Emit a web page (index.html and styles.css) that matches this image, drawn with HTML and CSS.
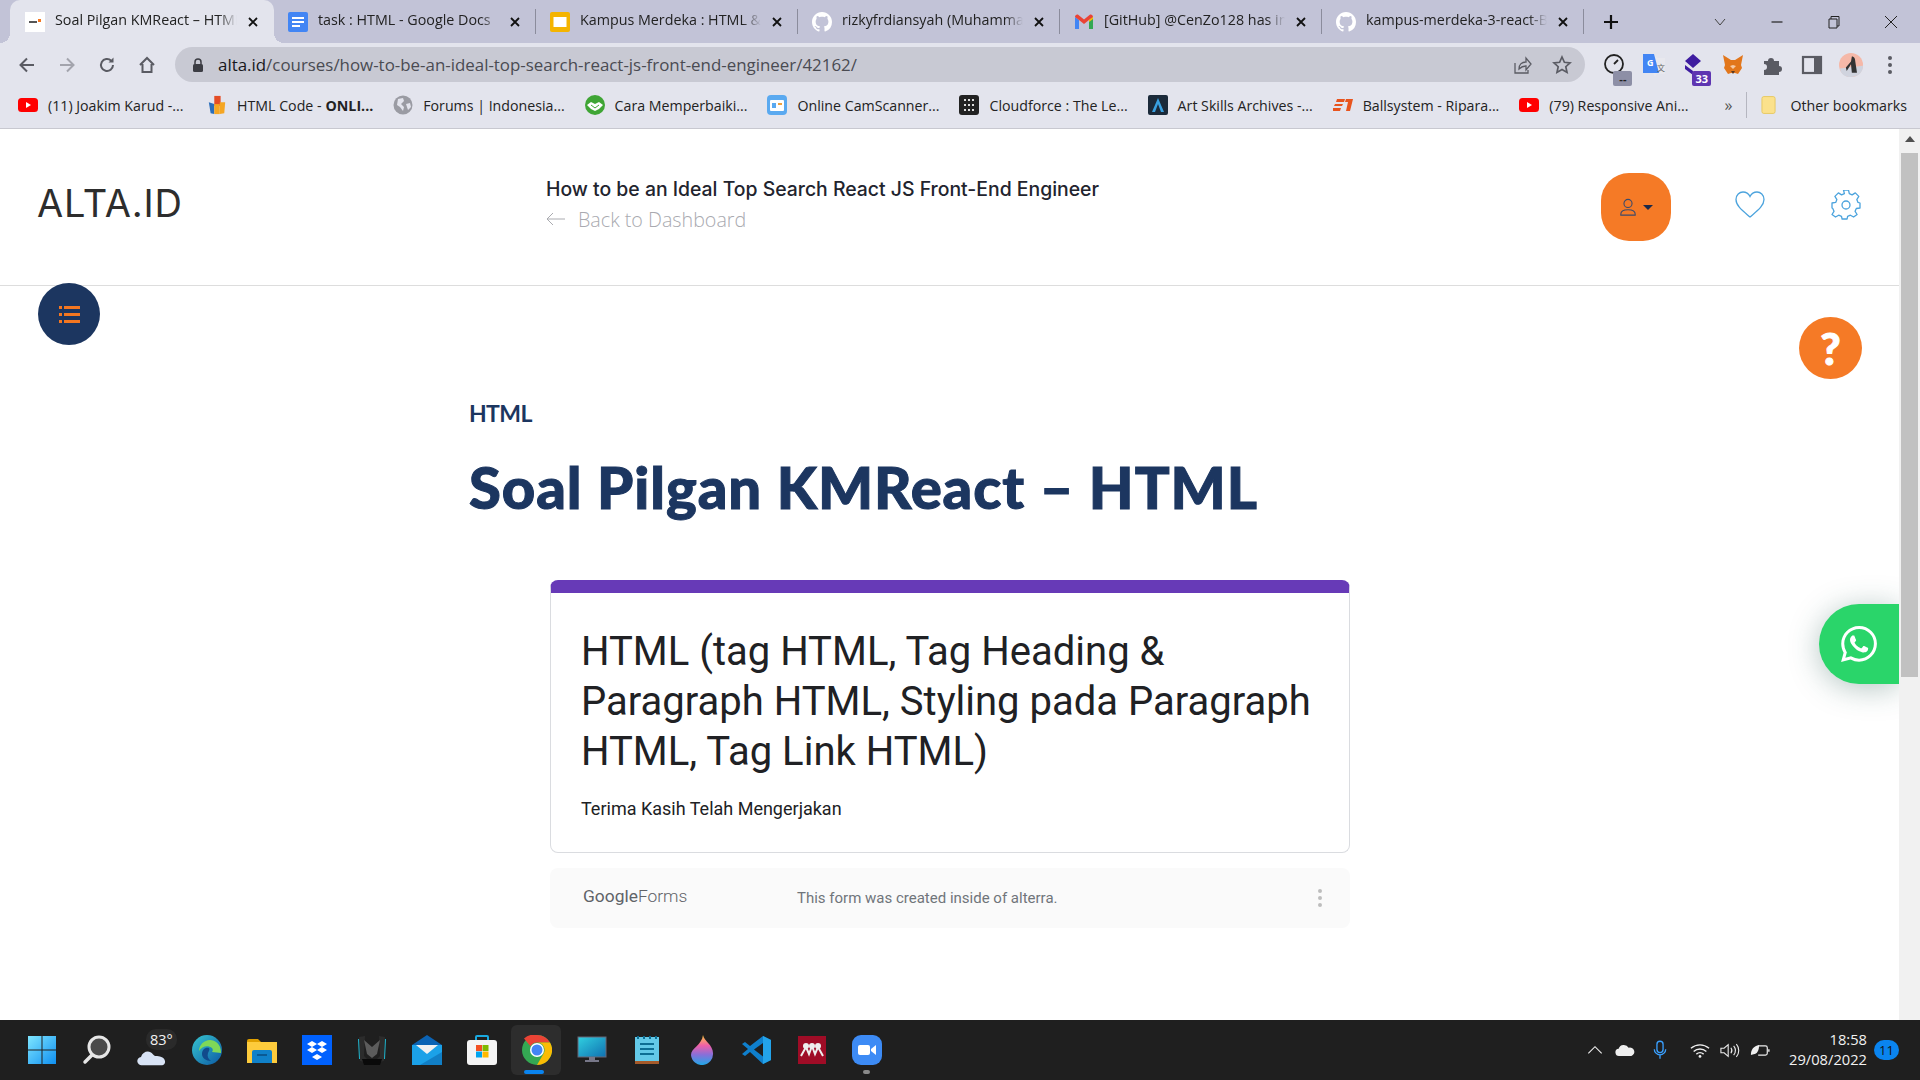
FILE: index.html
```html
<!DOCTYPE html>
<html lang="en">
<head>
    <meta charset="UTF-8">
    <meta name="viewport" content="width=device-width, initial-scale=1.0">
    <title>Soal Pilgan KMReact - HTML</title>
    <link rel="stylesheet" href="styles.css">
</head>
<body>

<svg class="defs" width="0" height="0">
    <symbol id="gh" viewBox="0 0 16 16"><path fill="#fff" d="M8 0C3.58 0 0 3.58 0 8c0 3.54 2.29 6.53 5.47 7.59.4.07.55-.17.55-.38 0-.19-.01-.82-.01-1.49-2.01.37-2.53-.49-2.69-.94-.09-.23-.48-.94-.82-1.13-.28-.15-.68-.52-.01-.53.63-.01 1.08.58 1.23.82.72 1.21 1.87.87 2.33.66.07-.52.28-.87.51-1.07-1.78-.2-3.64-.89-3.64-3.95 0-.87.31-1.59.82-2.15-.08-.2-.36-1.02.08-2.12 0 0 .67-.21 2.2.82.64-.18 1.32-.27 2-.27.68 0 1.36.09 2 .27 1.53-1.04 2.2-.82 2.2-.82.44 1.1.16 1.92.08 2.12.51.56.82 1.27.82 2.15 0 3.07-1.87 3.75-3.65 3.95.29.25.54.73.54 1.48 0 1.07-.01 1.93-.01 2.2 0 .21.15.46.55.38A8.013 8.013 0 0016 8c0-4.42-3.58-8-8-8z"/></symbol>
    <symbol id="yt" viewBox="0 0 20 14"><rect width="20" height="14" rx="3.5" fill="#f00"/><path d="M8 4l5 3-5 3z" fill="#fff"/></symbol>
    <symbol id="x" viewBox="0 0 12 12"><path d="M2 2l8 8M10 2l-8 8" stroke="#111" stroke-width="1.8" fill="none"/></symbol>
</svg>

<div class="tabstrip">
    <div class="tab tab-active">
        <svg class="fav" viewBox="0 0 20 20"><rect width="20" height="20" fill="#fff"/><rect x="4" y="9" width="8" height="2" fill="#555"/><rect x="13" y="7" width="3" height="3" fill="#f47721"/></svg>
        <span class="tab-title">Soal Pilgan KMReact – HTML</span>
        <svg class="tab-x"><use href="#x"/></svg>
    </div>
    <div class="tab">
        <svg class="fav" viewBox="0 0 20 20"><rect width="20" height="20" rx="2" fill="#4285f4"/><path d="M4 6h12M4 10h12M4 14h8" stroke="#fff" stroke-width="2"/></svg>
        <span class="tab-title">task : HTML - Google Docs</span>
        <svg class="tab-x"><use href="#x"/></svg>
    </div>
    <div class="tab">
        <svg class="fav" viewBox="0 0 20 20"><rect width="20" height="20" rx="2" fill="#f4b400"/><rect x="3.5" y="5" width="13" height="10" fill="#fff"/></svg>
        <span class="tab-title">Kampus Merdeka : HTML &amp; CSS</span>
        <svg class="tab-x"><use href="#x"/></svg>
    </div>
    <div class="tab">
        <svg class="fav"><use href="#gh"/></svg>
        <span class="tab-title">rizkyfrdiansyah (Muhammad Rizky)</span>
        <svg class="tab-x"><use href="#x"/></svg>
    </div>
    <div class="tab">
        <svg class="fav" viewBox="0 0 20 16"><path d="M1 15V3l4 3v9z" fill="#4285f4"/><path d="M19 15V3l-4 3v9z" fill="#34a853"/><path d="M1 3c0-2 2-3 3.500-2L10 5.500 15.500 1C17 0 19 1 19 3l-4 3-5 4-5-4z" fill="#ea4335"/><path d="M15 6l4-3v2l-4 3z" fill="#fbbc04"/></svg>
        <span class="tab-title">[GitHub] @CenZo128 has invited</span>
        <svg class="tab-x"><use href="#x"/></svg>
    </div>
    <div class="tab">
        <svg class="fav"><use href="#gh"/></svg>
        <span class="tab-title">kampus-merdeka-3-react-BE-main</span>
        <svg class="tab-x"><use href="#x"/></svg>
    </div>
    <svg class="new-tab" viewBox="0 0 16 16"><path d="M8 1v14M1 8h14" stroke="#111" stroke-width="2.200"/></svg>
    <div class="window-controls">
        <svg viewBox="0 0 14 14"><path d="M2 4l5 6 5-6" stroke="#444" fill="none"/></svg>
        <svg viewBox="0 0 14 14"><path d="M1.500 7h11" stroke="#222" stroke-width="1.200"/></svg>
        <svg viewBox="0 0 14 14"><path d="M2 4h8v9H2zM4 4V1.500h8V11h-2" stroke="#222" fill="none"/></svg>
        <svg viewBox="0 0 14 14"><path d="M1 1l12 12M13 1L1 13" stroke="#222" fill="none"/></svg>
    </div>
</div>

<div class="toolbar">
    <svg class="nav-icon" viewBox="0 0 20 20"><path d="M17 10H4M10 3.500L3.500 10l6.500 6.500" stroke="#5a5b63" stroke-width="2" fill="none"/></svg>
    <svg class="nav-icon" viewBox="0 0 20 20"><path d="M3 10h13M10 3.500l6.500 6.500-6.500 6.500" stroke="#a3a4ad" stroke-width="2" fill="none"/></svg>
    <svg class="nav-icon" viewBox="0 0 20 20"><path d="M16 10a6 6 0 1 1-1.800-4.300" stroke="#5a5b63" stroke-width="2" fill="none"/><path d="M16.500 2.500v5h-5z" fill="#5a5b63"/></svg>
    <svg class="nav-icon" viewBox="0 0 20 20"><path d="M3 10l7-7 7 7M5.500 9v8h9V9" stroke="#5a5b63" stroke-width="2" fill="none"/></svg>
    <div class="omnibox">
        <svg class="lock" viewBox="0 0 12 14"><path d="M3 6V4a3 3 0 0 1 6 0v2" stroke="#3c3d44" stroke-width="1.500" fill="none"/><rect x="1" y="6" width="10" height="8" rx="1.500" fill="#3c3d44"/></svg>
        <span class="url"><b>alta.id</b>/courses/how-to-be-an-ideal-top-search-react-js-front-end-engineer/42162/</span>
        <svg class="omni-icon" viewBox="0 0 20 20"><path d="M3 8v10h13v-3M7 14c0-5 3-7 7-7V3l5 6-5 6v-4c-3 0-5 1-7 3z" stroke="#5a5b63" stroke-width="1.300" fill="none"/></svg>
        <svg class="omni-icon" viewBox="0 0 20 20"><path d="M10 2l2.400 5.300 5.600.6-4.200 3.800 1.200 5.700L10 14.500l-5 2.900 1.200-5.700L2 7.900l5.600-.6z" stroke="#5a5b63" stroke-width="1.700" fill="none"/></svg>
    </div>
    <div class="extensions">
        <div class="ext">
            <svg viewBox="0 0 24 24"><circle cx="11" cy="11" r="9" fill="none" stroke="#222" stroke-width="1.800"/><path d="M11 11l4-4" stroke="#222" stroke-width="1.800"/></svg>
            <span class="ext-badge badge-grey">--</span>
        </div>
        <div class="ext">
            <svg viewBox="0 0 24 24"><path d="M1 1h11l3 4h8v16h-8l-2 3-2-4H1z" fill="#e8e8ee"/><path d="M1 1h11l5 19H1z" fill="#4285f4"/><text x="5" y="13" class="ext-g">G</text><text x="15" y="18" class="ext-t">文</text></svg>
        </div>
        <div class="ext">
            <svg viewBox="0 0 24 24"><path d="M12 1l8 7-8 7-8-7zM4 12l8 6v4l-8-6z" fill="#3e1ca0"/></svg>
            <span class="ext-badge badge-purple">33</span>
        </div>
        <div class="ext">
            <svg viewBox="0 0 24 24"><path d="M2 2l8 5h4l8-5-2 10 1 3-4 6-3-1h-4l-3 1-4-6 1-3z" fill="#e2761b"/><path d="M9 13l3 3 3-3-3-1z" fill="#f6c9a4"/><path d="M10 18h4l-2 3z" fill="#5c3a21"/></svg>
        </div>
        <div class="ext">
            <svg viewBox="0 0 24 24"><path d="M4 8h4a3 3 0 0 1 6 0h5v5a3 3 0 0 1 0 6v3H4v-5a3 3 0 0 0 0-6z" fill="#5a5b63"/></svg>
        </div>
        <div class="ext">
            <svg viewBox="0 0 24 24"><rect x="3" y="4" width="18" height="16" fill="none" stroke="#5a5b63" stroke-width="2.200"/><rect x="14" y="4" width="7" height="16" fill="#5a5b63"/></svg>
        </div>
        <div class="ext">
            <svg viewBox="0 0 28 28"><circle cx="14" cy="14" r="14" fill="#f5b8a8"/><path d="M1 18l27-3c0 8-6 13-14 13S2 24 1 18z" fill="#d0d3de"/><path d="M15 4c3 0 4 3 4 6l2 13h-6l-1-10-5 8-1-4 6-7z" fill="#333"/></svg>
        </div>
        <div class="ext">
            <svg viewBox="0 0 24 24"><circle cx="12" cy="5" r="2" fill="#5a5b63"/><circle cx="12" cy="12" r="2" fill="#5a5b63"/><circle cx="12" cy="19" r="2" fill="#5a5b63"/></svg>
        </div>
    </div>
</div>

<div class="bookmarks">
    <a class="bm"><svg class="bm-icon"><use href="#yt"/></svg>(11) Joakim Karud -...</a>
    <a class="bm"><svg class="bm-icon" viewBox="0 0 20 22"><path d="M7 1h7v11H7z" fill="#e44d26"/><path d="M1 8l6 2v11l-4-1z" fill="#2a6ebb"/><path d="M7 10h6v11H7z" fill="#f5a623"/><path d="M13 8h6l-1 12-5 1z" fill="#f5a623"/></svg>HTML Code - <b>ONLI...</b></a>
    <a class="bm"><svg class="bm-icon" viewBox="0 0 20 20"><circle cx="10" cy="10" r="9.500" fill="#9a9ba3"/><path d="M5 4l5-1 1 3-3 3 3 3-1 4-3-4-3-2zM13 9l4-1 1 4-3 3z" fill="#e3e4ed"/></svg>Forums | Indonesia...</a>
    <a class="bm"><svg class="bm-icon" viewBox="0 0 20 20"><circle cx="10" cy="10" r="10" fill="#3fa535"/><path d="M2 10l4-3 4 2 4-2 4 3-4 4-4 2-4-2z" fill="#fff"/><path d="M6 10l4 3 4-3" stroke="#3fa535" fill="none"/></svg>Cara Memperbaiki...</a>
    <a class="bm"><svg class="bm-icon" viewBox="0 0 20 20"><rect width="20" height="20" rx="4" fill="#5aa9f0"/><rect x="3" y="5" width="14" height="11" rx="1" fill="#fff"/><rect x="5" y="8" width="4" height="5" fill="#5aa9f0"/><rect x="11" y="8" width="4" height="2" fill="#f0a03c"/></svg>Online CamScanner...</a>
    <a class="bm"><svg class="bm-icon" viewBox="0 0 20 20"><rect width="20" height="20" rx="3" fill="#222"/><path d="M5 4h2v2H5zM9 4h2v2H9zM13 4h2v2h-2zM5 9h2v2H5zM9 9h2v2H9zM13 9h2v2h-2zM5 14h2v2H5zM9 14h2v2H9zM13 14h2v2h-2z" fill="#ddd"/></svg>Cloudforce : The Le...</a>
    <a class="bm"><svg class="bm-icon" viewBox="0 0 20 20"><rect width="20" height="20" rx="2" fill="#1b2a3a"/><path d="M10 3l6 14h-3l-3-8-3 8H4z" fill="#3aa0e0"/></svg>Art Skills Archives -...</a>
    <a class="bm"><svg class="bm-icon" viewBox="0 0 20 14"><path d="M4 1h8l-1 3H3zM2 6h8l-1 2H1zM0 10h8l-1 3H0zM13 1h7l-3 12h-4l2-9h-3z" fill="#e8541e"/></svg>Ballsystem - Ripara...</a>
    <a class="bm"><svg class="bm-icon"><use href="#yt"/></svg>(79) Responsive Ani...</a>
    <span class="bm-more">»</span>
    <span class="bm-sep"></span>
    <a class="bm"><svg class="bm-folder" viewBox="0 0 16 20"><rect x="1" y="1" width="14" height="18" rx="2" fill="#fbe18c" stroke="#e6c860"/></svg>Other bookmarks</a>
</div>

<div class="page">
    <main class="page-main">
        <header class="site-header">
            <div class="logo">ALTA.ID</div>
            <div class="course-info">
                <div class="course-title">How to be an Ideal Top Search React JS Front-End Engineer</div>
                <a class="back-link">
                    <svg viewBox="0 0 20 14"><path d="M19 7H1M7 1L1 7l6 6" stroke="#aaabb0" fill="none"/></svg>
                    Back to Dashboard
                </a>
            </div>
            <button class="user-btn">
                <svg viewBox="0 0 20 20"><circle cx="10" cy="6" r="4.500" stroke="#3c4a6b" stroke-width="1.200" fill="none"/><path d="M2 19v-1c0-3 3-5 8-5s8 2 8 5v1z" stroke="#3c4a6b" stroke-width="1.200" fill="none"/></svg>
                <span class="caret"></span>
            </button>
            <svg class="head-icon heart" viewBox="0 0 30 28"><path d="M15 26C8 20 1 15 1 8.500 1 4 4.500 1 8 1c3 0 5.500 1.500 7 4.500C16.500 2.500 19 1 22 1c3.500 0 7 3 7 7.500C29 15 22 20 15 26z" stroke="#4ba3dd" stroke-width="1.300" fill="none"/></svg>
            <svg class="head-icon gear" viewBox="0 0 30 30"><path d="M12.500 1h5l.8 3.700 2.800 1.200 3.200-2 3.500 3.500-2 3.200 1.200 2.800L29 14v5l-3.700.5-1.200 2.800 2 3.200-3.500 2.500-3.200-1.800-2.800 1.200-.5 2.600h-5l-.6-2.600-2.800-1.200-3.200 1.800-3.500-2.500 2-3.200-1.200-2.800L1 19v-5l3.700-.6 1.200-2.800-2-3.200 3.500-3.500 3.200 2 2.800-1.200z" stroke="#4ba3dd" stroke-width="1.300" stroke-linejoin="round" fill="none" transform="translate(0 -1)"/><circle cx="15" cy="15" r="4" stroke="#4ba3dd" stroke-width="1.300" fill="none"/></svg>
        </header>

        <div class="content">
            <div class="section-name">HTML</div>
            <h1 class="quiz-title">Soal Pilgan KMReact – HTML</h1>

            <div class="form-card">
                <h2>HTML (tag HTML, Tag Heading &amp; Paragraph HTML, Styling pada Paragraph HTML, Tag Link HTML)</h2>
                <p>Terima Kasih Telah Mengerjakan</p>
            </div>
            <div class="form-footer">
                <span class="gforms"><b>Google</b>Forms</span>
                <span class="form-note">This form was created inside of alterra.</span>
                <span class="form-dots"><i></i><i></i><i></i></span>
            </div>
        </div>

        <button class="fab-menu">
            <svg viewBox="0 0 21 17"><path d="M0 0h3v3H0zM0 7h3v3H0zM0 14h3v3H0zM5 0h16v3H5zM5 7h16v3H5zM5 14h16v3H5z" fill="#f47721"/></svg>
        </button>
        <button class="fab-help">?</button>
        <button class="fab-whatsapp">
            <svg viewBox="0 0 24 24"><path fill="#fff" d="M17.472 14.382c-.297-.149-1.758-.867-2.03-.967-.273-.099-.471-.148-.67.15-.197.297-.767.966-.94 1.164-.173.199-.347.223-.644.075-.297-.15-1.255-.463-2.39-1.475-.883-.788-1.48-1.761-1.653-2.059-.173-.297-.018-.458.13-.606.134-.133.298-.347.446-.52.149-.174.198-.298.298-.497.099-.198.05-.371-.025-.52-.075-.149-.669-1.612-.916-2.207-.242-.579-.487-.5-.669-.51-.173-.008-.371-.01-.57-.01-.198 0-.52.074-.792.372-.272.297-1.04 1.016-1.04 2.479 0 1.462 1.065 2.875 1.213 3.074.149.198 2.096 3.2 5.077 4.487.709.306 1.262.489 1.694.625.712.227 1.36.195 1.871.118.571-.085 1.758-.719 2.006-1.413.248-.694.248-1.289.173-1.413-.074-.124-.272-.198-.57-.347m-5.421 7.403h-.004a9.87 9.87 0 01-5.031-1.378l-.361-.214-3.741.982.998-3.648-.235-.374a9.86 9.86 0 01-1.51-5.26c.001-5.45 4.436-9.884 9.888-9.884 2.64 0 5.122 1.03 6.988 2.898a9.825 9.825 0 012.893 6.994c-.003 5.45-4.437 9.884-9.885 9.884m8.413-18.297A11.815 11.815 0 0012.05 0C5.495 0 .16 5.335.157 11.892c0 2.096.547 4.142 1.588 5.945L.057 24l6.305-1.654a11.882 11.882 0 005.683 1.448h.005c6.554 0 11.89-5.335 11.893-11.893a11.821 11.821 0 00-3.48-8.413z"/></svg>
        </button>
    </main>
    <div class="scrollbar">
        <div class="scroll-up"></div>
        <div class="scroll-thumb"></div>
    </div>
</div>

<footer class="taskbar">
    <div class="task-apps">
        <div class="app"><svg viewBox="0 0 30 30"><defs><linearGradient id="win" x1="0" y1="0" x2="1" y2="1"><stop offset="0" stop-color="#7fe6ff"/><stop offset="1" stop-color="#0f8ff0"/></linearGradient></defs><path d="M1 1h13.500v13.500H1zM15.500 1H29v13.500H15.500zM1 15.500h13.500V29H1zM15.500 15.500H29V29H15.500z" fill="url(#win)"/></svg></div>
        <div class="app"><svg viewBox="0 0 30 30"><circle cx="17" cy="12" r="10" fill="#4a4a4a" stroke="#e6e6e6" stroke-width="3"/><path d="M10 20l-7 7" stroke="#e6e6e6" stroke-width="3.500" stroke-linecap="round"/></svg></div>
        <div class="app app-weather">
            <svg viewBox="0 0 32 24"><path d="M5 22a4.500 4.500 0 0 1-1-9c2-6 9-8 13-3 1 1 2 2 3 2 4 0 9 1 10 5 1 3-1 5-3 5z" fill="#d8e3f5"/></svg>
            <span class="temp">83°</span>
        </div>
        <div class="app"><svg viewBox="0 0 30 30"><defs><linearGradient id="edge" x1="0" y1="0" x2="1" y2="1"><stop offset="0" stop-color="#37c6d0"/><stop offset="1" stop-color="#0c59a4"/></linearGradient></defs><circle cx="15" cy="15" r="15" fill="url(#edge)"/><path d="M29 17c0-8-6-12-11-12-6 0-11 5-11 11 3-5 9-6 13-3 1 1 1 3 0 4l9 1z" fill="#7fd858"/><path d="M17 13c-4-1-7 2-7 6s4 7 9 7c-3-2-4-5-3-8 1-2 2-4 1-5z" fill="#114a8b"/></svg></div>
        <div class="app"><svg viewBox="0 0 30 30"><path d="M0 6a2 2 0 0 1 2-2h9l3 3h-14z" fill="#e0a000"/><path d="M0 7h30v21H0z" fill="#fdcb3c"/><path d="M5 17a2 2 0 0 1 2-2h16a2 2 0 0 1 2 2v11H5z" fill="#1081c9"/><path d="M10 20h10" stroke="#0a5a94" stroke-width="2"/></svg></div>
        <div class="app"><svg viewBox="0 0 30 30"><rect width="30" height="30" fill="#0061fe"/><path d="M10 6l5 3-5 3-5-3zM20 6l5 3-5 3-5-3zM10 12l5 3-5 3-5-3zM20 12l5 3-5 3-5-3zM15 19l5 3-5 3-5-3z" fill="#fff"/></svg></div>
        <div class="app"><svg viewBox="0 0 30 30"><path d="M2 2l6-1-1 20 8 8-12-3z" fill="#2c2c2c"/><path d="M28 2l-6-1 1 20-8 8 12-3z" fill="#2c2c2c"/><path d="M7 5l8 7 8-7-3 14-5 4-5-4z" fill="#5c5c5c"/><path d="M5 24h20l-2 6H7z" fill="#0a0a0a"/><path d="M1.500 4l1 20M28.500 4l-1 20" stroke="#1fb7d0"/></svg></div>
        <div class="app"><svg viewBox="0 0 30 30"><path d="M0 10L15 0l15 10v20H0z" fill="#0b63b4"/><path d="M0 10h30v20H0z" fill="#1ba1e8"/><path d="M4 10h22l-11 9z" fill="#f1f1f1"/><path d="M30 30H8l22-13z" fill="#117fc6"/></svg></div>
        <div class="app"><svg viewBox="0 0 30 30"><path d="M9 5V2a1 1 0 0 1 1-1h10a1 1 0 0 1 1 1v3" stroke="#19a9e0" stroke-width="2" fill="none"/><rect y="5" width="30" height="25" rx="3" fill="#f4f4f4"/><path d="M9 10h6v6H9z" fill="#f25022"/><path d="M15.500 10h6v6h-6z" fill="#7fba00"/><path d="M9 16.500h6v6H9z" fill="#00a4ef"/><path d="M15.500 16.500h6v6h-6z" fill="#ffb900"/></svg></div>
        <div class="app app-open">
            <svg viewBox="0 0 30 30"><circle cx="15" cy="15" r="15" fill="#34a853"/><path d="M15 0a15 15 0 0 1 13 7.500H15a7.500 7.500 0 0 0-6.500 3.800L2 3.500A15 15 0 0 1 15 0z" fill="#ea4335"/><path d="M28 7.500A15 15 0 0 1 15 30l6.500-11.200A7.500 7.500 0 0 0 15 7.500z" fill="#fbbc04"/><circle cx="15" cy="15" r="7" fill="#fff"/><circle cx="15" cy="15" r="5.500" fill="#4285f4"/></svg>
            <span class="app-bar"></span>
        </div>
        <div class="app"><svg viewBox="0 0 30 30"><defs><linearGradient id="mon" x1="0" y1="0" x2="1" y2="1"><stop offset="0" stop-color="#30d0e0"/><stop offset="1" stop-color="#1070b0"/></linearGradient></defs><rect x="1" y="2" width="28" height="20" fill="url(#mon)" stroke="#667"/><path d="M12 22h6v3h4v2H8v-2h4z" fill="#778"/></svg></div>
        <div class="app"><svg viewBox="0 0 24 30"><rect y="2" width="24" height="24" fill="#63c9e8"/><path d="M0 26h24v3H0z" fill="#a55a2a"/><path d="M5 9h14M5 14h14M5 19h14" stroke="#0d6e94" stroke-width="2"/><path d="M3 1v3M9 1v3M15 1v3M21 1v3" stroke="#0d6e94" stroke-width="2"/></svg></div>
        <div class="app"><svg viewBox="0 0 24 30"><defs><linearGradient id="paint" x1="0" y1="0" x2="0" y2="1"><stop offset="0" stop-color="#ffc83d"/><stop offset=".35" stop-color="#ef5fa7"/><stop offset=".65" stop-color="#8a6fd8"/><stop offset="1" stop-color="#1fa8e8"/></linearGradient></defs><path d="M13 0c1 6 10 10 10 18a11 11 0 0 1-22 2C1 13 12 10 13 0z" fill="url(#paint)"/></svg></div>
        <div class="app"><svg viewBox="0 0 30 30"><path d="M21 1l8 4v20l-8 4L8 17l-5 4-3-2 6-5-6-5 3-2 5 4z" fill="#0f7fcc"/><path d="M21 1l8 4v20l-8 4z" fill="#23a3ea"/><path d="M21 8l-9 6.500 9 7z" fill="#1f1f1f"/></svg></div>
        <div class="app"><svg viewBox="0 0 30 30"><rect width="28" height="28" x="1" y="1" fill="#9f0c26"/><circle cx="15" cy="11" r="3" fill="#eee"/><circle cx="9" cy="11" r="3" fill="#eee"/><circle cx="21" cy="11" r="3" fill="#eee"/><path d="M4 21l5-9 3 7 3-8 3 8 3-7 5 9" stroke="#eee" stroke-width="2" fill="none"/></svg></div>
        <div class="app app-running">
            <svg viewBox="0 0 30 30"><rect width="30" height="30" rx="9" fill="#3d8bf5"/><rect x="6" y="10" width="12" height="10" rx="2" fill="#fff"/><path d="M19 14l5-4v10l-5-4z" fill="#fff"/></svg>
            <span class="app-dot"></span>
        </div>
    </div>
    <div class="tray">
        <svg class="tray-chevron" viewBox="0 0 18 12"><path d="M1 10l8-8 8 8" stroke="#eee" stroke-width="1.300" fill="none"/></svg>
        <svg class="tray-cloud" viewBox="0 0 22 14"><path d="M5 13a4 4 0 0 1-1-8 6 6 0 0 1 11-1 4.500 4.500 0 0 1 3 9z" fill="#eee"/></svg>
        <svg class="tray-mic" viewBox="0 0 16 22"><rect x="4.500" y="1" width="7" height="13" rx="3.500" stroke="#3aa0ff" stroke-width="1.500" fill="none"/><path d="M1.500 10a6.500 6.500 0 0 0 13 0M8 17v4" stroke="#3aa0ff" stroke-width="1.500" fill="none"/></svg>
        <svg class="tray-wifi" viewBox="0 0 22 16"><path d="M1 5.500c6-5 14-5 20 0M4 9c4-3.500 10-3.500 14 0M7 12c2.400-2 5.600-2 8 0" stroke="#eee" stroke-width="1.500" fill="none"/><circle cx="11" cy="14.500" r="1.500" fill="#eee"/></svg>
        <svg class="tray-vol" viewBox="0 0 22 16"><path d="M1 5.500h3.500L9 1.500v13l-4.500-4H1z" stroke="#eee" stroke-width="1.200" fill="none"/><path d="M12 5c1.500 2 1.500 4 0 6M15 3c2.500 3 2.500 7 0 10M18 1c3.500 4 3.500 10 0 14" stroke="#eee" stroke-width="1.200" fill="none"/></svg>
        <svg class="tray-batt" viewBox="0 0 22 14"><path d="M9 2h8a2 2 0 0 1 2 2v6a2 2 0 0 1-2 2H9" stroke="#eee" stroke-width="1.300" fill="none"/><path d="M20 5.500h1.500v3H20z" fill="#eee"/><path d="M1 12C1 6 4 2 10 1c0 6-2 10-6 10z" fill="#eee"/></svg>
        <div class="clock"><div>18:58</div><div>29/08/2022</div></div>
        <span class="notif">11</span>
    </div>
</footer>

</body>
</html>
```

FILE: styles.css
```css
body {
    margin: 0;
    width: 1920px;
    height: 1080px;
    overflow: hidden;
    display: flex;
    flex-direction: column;
    font-family: "Open Sans", Arial, sans-serif;
    background-color: #fff;
}
.defs {
    position: absolute;
}

/* browser chrome */
.tabstrip {
    height: 43px;
    flex: none;
    display: flex;
    align-items: center;
    padding-left: 10px;
    background-color: #c2c3d7;
}
.tab {
    position: relative;
    width: 262px;
    height: 43px;
    flex: none;
    box-sizing: border-box;
    display: flex;
    align-items: center;
    gap: 10px;
    padding: 0 15px 0 14px;
}
.tab:not(.tab-active)::after {
    content: "";
    position: absolute;
    right: 0;
    top: 9px;
    height: 25px;
    border-right: 1px solid #8b8c9c;
}
.tab-active {
    width: 264px;
    padding-left: 15px;
    background-color: #e3e4ed;
    border-radius: 10px 10px 0 0;
}
.tab-active::before,
.tab-active::after {
    content: "";
    position: absolute;
    bottom: 0;
    width: 10px;
    height: 10px;
}
.tab-active::before {
    left: -10px;
    background: radial-gradient(circle at 0 0, transparent 10px, #e3e4ed 10px);
}
.tab-active::after {
    right: -10px;
    background: radial-gradient(circle at 100% 0, transparent 10px, #e3e4ed 10px);
}
.fav {
    width: 20px;
    height: 20px;
    flex: none;
}
.tab-title {
    flex: 1;
    min-width: 0;
    overflow: hidden;
    white-space: nowrap;
    font-size: 14.3px;
    line-height: 18px;
    margin-bottom: 3px;
    color: #222;
    -webkit-mask-image: linear-gradient(to right, #000 90%, transparent);
    mask-image: linear-gradient(to right, #000 90%, transparent);
}
.tab-x {
    width: 12px;
    height: 12px;
    flex: none;
}
.new-tab {
    width: 16px;
    height: 16px;
    margin-left: 19px;
}
.window-controls {
    margin-left: auto;
    display: flex;
    align-items: center;
    gap: 43px;
    padding-right: 22px;
}
.window-controls svg {
    width: 14px;
    height: 14px;
}
.toolbar {
    height: 43px;
    flex: none;
    display: flex;
    align-items: center;
    padding-left: 7px;
    background-color: #e3e4ed;
}
.nav-icon {
    width: 20px;
    height: 20px;
    padding: 0 10px;
}
.omnibox {
    width: 1410px;
    height: 35px;
    margin-left: 8px;
    box-sizing: border-box;
    display: flex;
    align-items: center;
    padding: 0 13px 0 17px;
    gap: 20px;
    border-radius: 18px;
    background-color: #c8c9d3;
}
.lock {
    width: 12px;
    height: 14px;
}
.url {
    flex: 1;
    margin-left: -6px;
    font-size: 16.9px;
    color: #4a4b52;
    white-space: nowrap;
}
.url b {
    font-weight: 400;
    color: #17181c;
}
.omni-icon {
    width: 20px;
    height: 20px;
}
.extensions {
    display: flex;
    align-items: center;
    margin-left: 10px;
}
.ext {
    position: relative;
    width: 39.4px;
    height: 36px;
    display: flex;
    align-items: center;
    justify-content: center;
}
.ext svg {
    width: 24px;
    height: 24px;
}
.ext-g {
    font: 700 9px "Open Sans", sans-serif;
    fill: #fff;
}
.ext-t {
    font: 8px "Noto Sans CJK SC", sans-serif;
    fill: #666;
}
.ext-badge {
    position: absolute;
    right: 2px;
    bottom: -3px;
    min-width: 15px;
    height: 15px;
    padding: 0 2px;
    border-radius: 2px;
    font-size: 11px;
    font-weight: 700;
    line-height: 15px;
    text-align: center;
    color: #fff;
}
.badge-grey {
    background-color: #8d8fa6;
    color: #222;
}
.badge-purple {
    background-color: #5e35b1;
}
.bookmarks {
    height: 43px;
    flex: none;
    box-sizing: border-box;
    display: flex;
    align-items: center;
    gap: 20px;
    padding: 0 0 4px 18px;
    border-bottom: 1px solid #c8c8d0;
    background-color: #e3e4ed;
}
.bm {
    display: flex;
    align-items: center;
    gap: 10px;
    font-size: 14.2px;
    color: #222;
    white-space: nowrap;
}
.bm:first-child {
    margin-right: 3.5px;
}
.bm b {
    margin-left: -6px;
}
.bm-icon {
    width: 20px;
    height: 20px;
    flex: none;
}
.bm-folder {
    width: 15px;
    height: 20px;
    flex: none;
    margin-right: 4px;
}
.bm-more {
    margin-left: 16px;
    font-size: 16px;
    color: #555;
}
.bm-sep {
    height: 26px;
    border-right: 1px solid #b5b6c0;
    margin-left: -6px;
    margin-right: -6px;
}

/* page */
.page {
    flex: 1;
    min-height: 0;
    display: flex;
}
.page-main {
    position: relative;
    flex: 1;
    min-width: 0;
}
.site-header {
    height: 156px;
    display: flex;
    align-items: center;
    padding: 0 38px 0 37px;
    border-bottom: 1px solid #ddd;
}
.logo {
    width: 509px;
    flex: none;
    padding-bottom: 8px;
    font-family: Inter, sans-serif;
    font-size: 38px;
    letter-spacing: 0.8px;
    color: #2d2d2d;
}
.course-info {
    flex: 1;
    padding-bottom: 5px;
}
.course-title {
    font-family: Inter, sans-serif;
    font-size: 19.4px;
    font-weight: 500;
    color: #22242e;
}
.back-link {
    display: flex;
    align-items: center;
    gap: 12px;
    margin-top: 5px;
    font-size: 19.7px;
    font-weight: 300;
    color: #a9aab0;
}
.back-link svg {
    width: 20px;
    height: 14px;
}
.user-btn {
    width: 70px;
    height: 68px;
    flex: none;
    display: flex;
    align-items: center;
    justify-content: center;
    gap: 6px;
    border: none;
    border-radius: 28px;
    background-color: #f57a26;
}
.user-btn svg {
    width: 18px;
    height: 18px;
}
.caret {
    border-top: 5px solid #1c2a4a;
    border-left: 5px solid transparent;
    border-right: 5px solid transparent;
}
.head-icon {
    width: 30px;
    flex: none;
    margin-bottom: 5px;
}
.heart {
    height: 28px;
    margin-left: 64px;
}
.gear {
    height: 30px;
    margin-left: 66px;
}
.content {
    padding: 112px 0 0 469px;
    color: #1c3660;
}
.section-name {
    font-family: Lato, sans-serif;
    font-size: 23px;
    font-weight: 700;
    letter-spacing: -0.6px;
    line-height: 30px;
}
.quiz-title {
    margin: 24px 0 58px;
    font-family: Lato, sans-serif;
    font-size: 58px;
    font-weight: 900;
    letter-spacing: 0.9px;
    line-height: 70px;
    -webkit-text-stroke: 1px #1c3660;
}
.form-card {
    width: 800px;
    margin-left: 81px;
    box-sizing: border-box;
    padding: 34px 30px 31px;
    border: 1px solid #dadce0;
    border-top: 13px solid #673ab7;
    border-radius: 8px;
    color: #202124;
    font-family: Roboto, sans-serif;
}
.form-card h2 {
    margin: 0;
    font-size: 40px;
    font-weight: 400;
    line-height: 50px;
}
.form-card p {
    margin: 20px 0 0;
    font-size: 18px;
    line-height: 24px;
}
.form-footer {
    width: 800px;
    height: 60px;
    margin: 15px 0 0 81px;
    box-sizing: border-box;
    display: flex;
    align-items: center;
    padding: 0 28px 0 33px;
    border-radius: 8px;
    background-color: #fafafa;
    font-family: Roboto, sans-serif;
}
.gforms {
    width: 214px;
    flex: none;
    padding-bottom: 4px;
    font-size: 17.4px;
    font-weight: 300;
    color: #5f6368;
}
.gforms b {
    font-weight: 400;
}
.form-note {
    flex: 1;
    font-size: 15px;
    color: #70757a;
}
.form-dots {
    display: flex;
    flex-direction: column;
    gap: 3px;
}
.form-dots i {
    width: 4px;
    height: 4px;
    border-radius: 50%;
    background-color: #bdbdbd;
}

/* floating buttons */
.fab-menu {
    position: absolute;
    left: 38px;
    top: 154px;
    width: 62px;
    height: 62px;
    padding: 0;
    display: flex;
    align-items: center;
    justify-content: center;
    border: none;
    border-radius: 50%;
    background-color: #1c3660;
}
.fab-menu svg {
    width: 21px;
    height: 17px;
}
.fab-help {
    position: absolute;
    right: 37px;
    top: 188px;
    width: 63px;
    height: 62px;
    padding: 0;
    border: none;
    border-radius: 50%;
    background-color: #f57a26;
    color: #fff;
    font-family: Lato, sans-serif;
    font-size: 44px;
    font-weight: 900;
    -webkit-text-stroke: 1px #fff;
}
.fab-whatsapp {
    position: absolute;
    right: 0;
    top: 475px;
    width: 80px;
    height: 80px;
    padding: 0;
    display: flex;
    align-items: center;
    justify-content: center;
    border: none;
    border-radius: 40px 0 0 40px;
    background-color: #2ad56a;
    box-shadow: 0 4px 30px rgba(40, 90, 80, 0.35);
}
.fab-whatsapp svg {
    width: 36px;
    height: 36px;
}
.scrollbar {
    position: relative;
    width: 21px;
    flex: none;
    box-sizing: border-box;
    padding: 0 2px;
    background-color: #f1f1f1;
}
.scroll-up {
    height: 24px;
    position: relative;
}
.scroll-up::before {
    content: "";
    position: absolute;
    left: 4px;
    top: 7px;
    border-bottom: 6px solid #505050;
    border-left: 5px solid transparent;
    border-right: 5px solid transparent;
}
.scroll-thumb {
    height: 524px;
    background-color: #c1c1c1;
}

/* windows taskbar */
.taskbar {
    height: 60px;
    flex: none;
    display: flex;
    justify-content: space-between;
    background-color: #1f1f1f;
    color: #f2f2f2;
}
.task-apps {
    display: flex;
    padding-left: 14px;
}
.app {
    position: relative;
    width: 55px;
    height: 60px;
    display: flex;
    align-items: center;
    justify-content: center;
}
.app svg {
    width: 30px;
    height: 30px;
}
.app-weather svg {
    width: 30px;
    height: 22px;
    margin-top: 12px;
}
.temp {
    position: absolute;
    left: 22px;
    top: 9px;
    padding: 0 4px;
    border-radius: 10px;
    background-color: #2a2a2a;
    font-size: 14.5px;
    line-height: 21px;
}
.app-open::before {
    content: "";
    position: absolute;
    left: 2px;
    right: 3px;
    top: 5px;
    bottom: 5px;
    border-radius: 6px;
    background-color: #2d2d2d;
}
.app-open svg {
    position: relative;
}
.app-bar {
    position: absolute;
    bottom: 6px;
    left: 15px;
    width: 20px;
    height: 4px;
    border-radius: 2px;
    background-color: #0a84ef;
}
.app-dot {
    position: absolute;
    bottom: 6px;
    left: 24px;
    width: 7px;
    height: 4px;
    border-radius: 2px;
    background-color: #8a8a8a;
}
.tray {
    display: flex;
    align-items: center;
    padding-right: 21px;
}
.tray svg {
    flex: none;
}
.tray-chevron {
    width: 16px;
    height: 10px;
}
.tray-cloud {
    width: 20px;
    height: 13px;
    margin-left: 12px;
}
.tray-mic {
    width: 14px;
    height: 20px;
    margin-left: 18px;
}
.tray-wifi {
    width: 20px;
    height: 15px;
    margin-left: 22.8px;
}
.tray-vol {
    width: 20px;
    height: 15px;
    margin-left: 10px;
}
.tray-batt {
    width: 20px;
    height: 13px;
    margin-left: 10px;
}
.clock {
    margin-left: 19px;
    padding-bottom: 2px;
    text-align: right;
    font-size: 14.7px;
    line-height: 20px;
}
.notif {
    width: 25px;
    height: 20px;
    margin-left: 7px;
    border-radius: 10px;
    background-color: #0a84ef;
    color: #111;
    font-size: 13px;
    line-height: 20px;
    text-align: center;
}
```
